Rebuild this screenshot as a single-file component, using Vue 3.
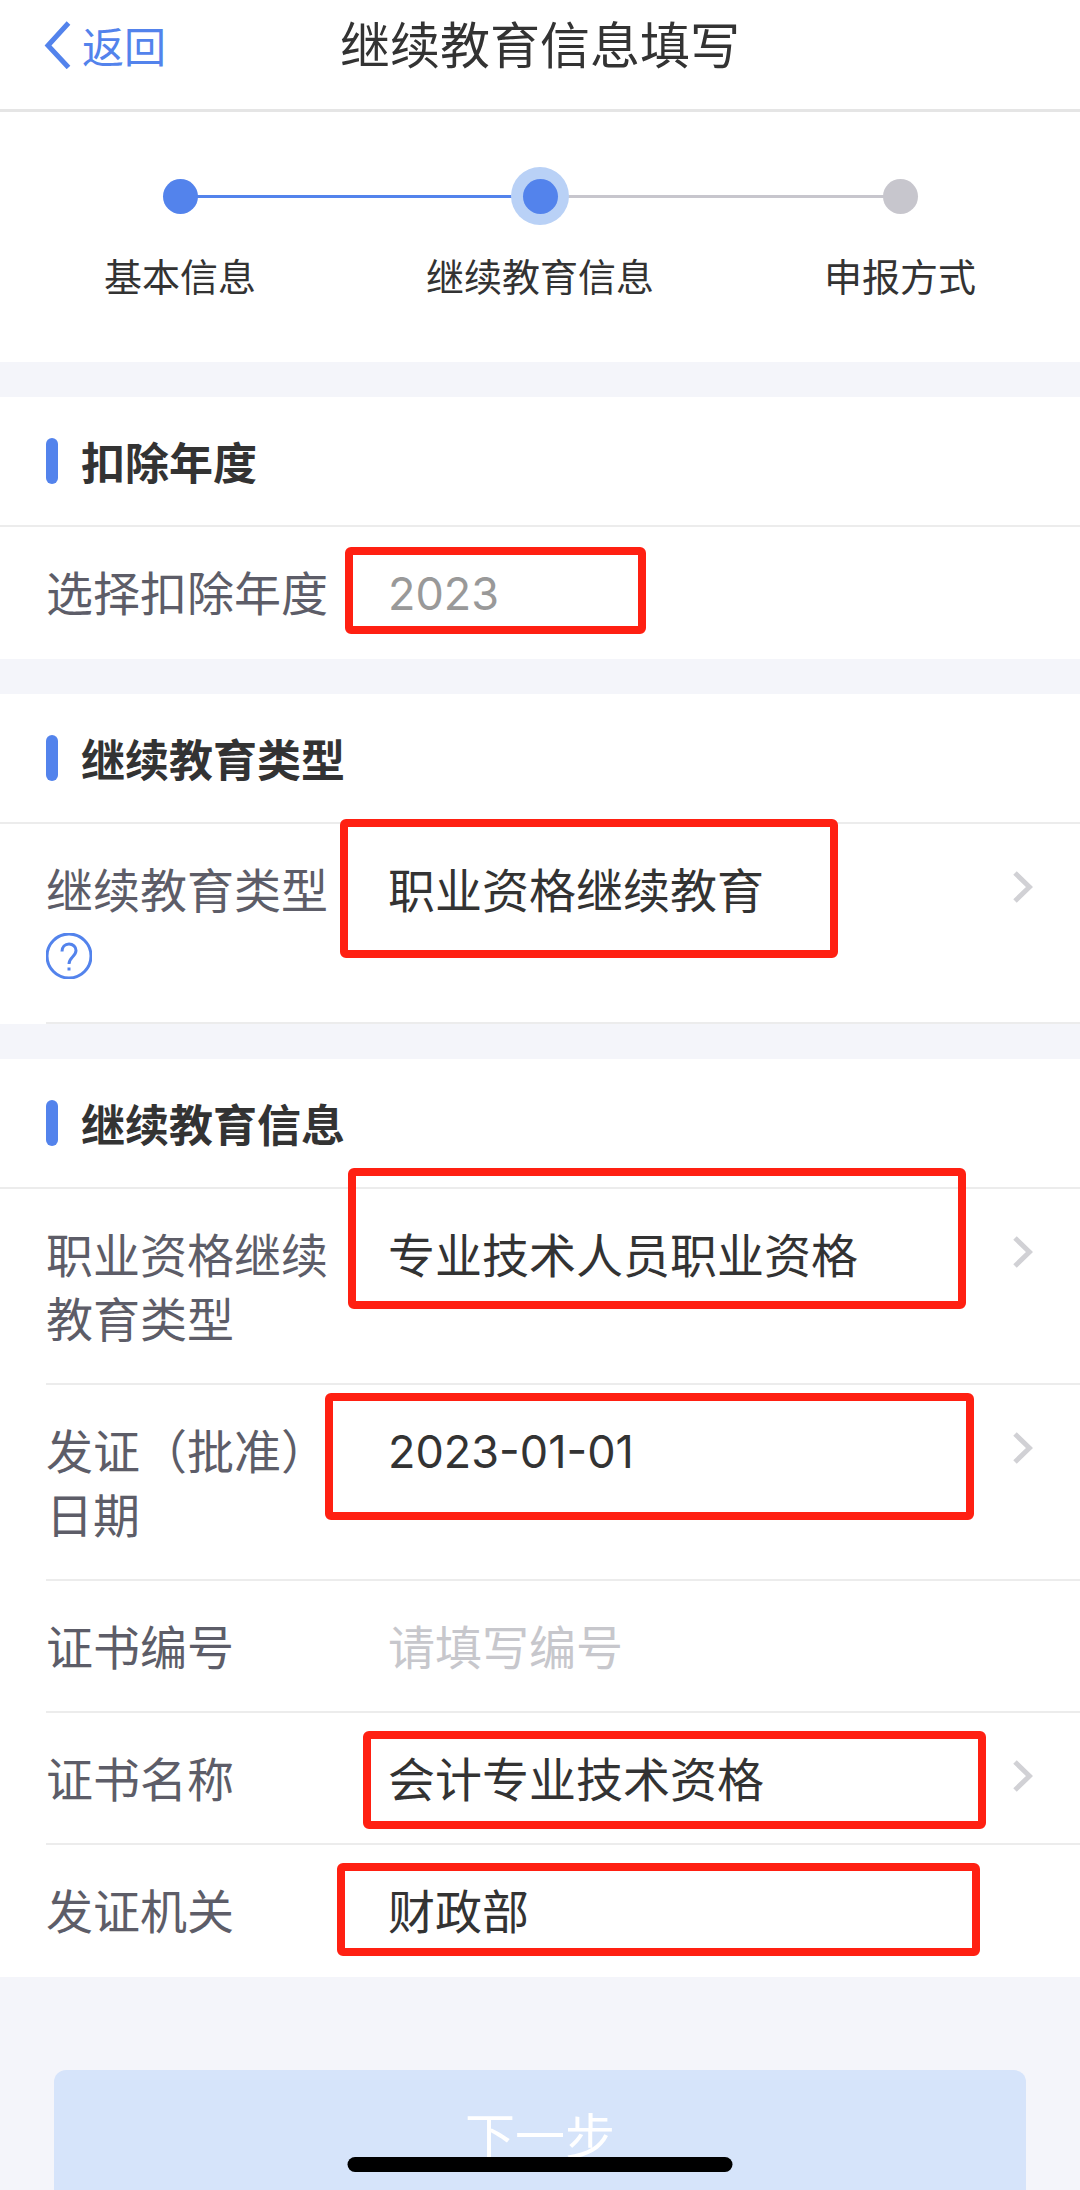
<script setup>
import { reactive } from 'vue'

const steps = [
  { name: '基本信息', state: 'done' },
  { name: '继续教育信息', state: 'current' },
  { name: '申报方式', state: 'todo' },
]

// mark: the red highlight frame drawn around a field, relative to its row
const sections = reactive([
  {
    title: '扣除年度',
    rows: [
      { id: 'year', label: '选择扣除年度', kind: 'fixed', value: '2023', mark: [299, 20, 301, 87] },
    ],
  },
  {
    title: '继续教育类型',
    rows: [
      { id: 'type', label: '继续教育类型', kind: 'select', value: '职业资格继续教育', help: true, line: true, mark: [294, -5, 498, 139] },
    ],
  },
  {
    title: '继续教育信息',
    rows: [
      { id: 'subtype', label: '职业资格继续教育类型', kind: 'select', value: '专业技术人员职业资格', line: true, mark: [302, -21, 618, 141] },
      { id: 'date', label: '发证（批准）日期', kind: 'date', value: '2023-01-01', line: true, mark: [279, 8, 649, 127] },
      { id: 'number', label: '证书编号', kind: 'text', value: '', placeholder: '请填写编号', line: true },
      { id: 'name', label: '证书名称', kind: 'select', value: '会计专业技术资格', line: true, mark: [317, 18, 623, 98] },
      { id: 'issuer', label: '发证机关', kind: 'text', value: '财政部', mark: [291, 18, 643, 93] },
    ],
  },
])

const markStyle = ([left, top, width, height]) => ({
  left: `${left}px`,
  top: `${top}px`,
  width: `${width}px`,
  height: `${height}px`,
})
</script>

<template>
  <div class="screen">
    <div class="scroll">
      <header class="bar">
        <button type="button" class="back">
          <svg width="28" height="48" viewBox="0 0 28 48" aria-hidden="true">
            <path d="M24.500 2 4 24.500l20.500 22" />
          </svg>
          <span>返回</span>
        </button>
        <h1>继续教育信息填写</h1>
      </header>

      <ol class="steps">
        <li v-for="step in steps" :key="step.name" :class="step.state">
          <span class="halo"><span class="dot"></span></span>
          <span class="step-name">{{ step.name }}</span>
        </li>
      </ol>

      <form @submit.prevent>
        <section v-for="section in sections" :key="section.title">
          <h2>{{ section.title }}</h2>
          <div v-for="row in section.rows" :key="row.id" class="row" :class="{ line: row.line }">
            <div class="label-col">
              <label :for="row.id">{{ row.label }}</label>
              <span v-if="row.help" class="help-line">
                <button type="button" class="help" aria-label="说明">
                  <svg width="46" height="46" viewBox="0 0 46 46" aria-hidden="true">
                    <circle cx="23" cy="23" r="22" />
                    <path d="M16 18.500c0-4.500 3-7.500 7-7.500s7 3 7 6.500c0 3-1.500 4.500-3.500 6.500S23 27.500 23 31" />
                    <path d="M23 34.500v3" />
                  </svg>
                </button>
              </span>
            </div>
            <select v-if="row.kind === 'select'" :id="row.id" v-model="row.value" class="value">
              <option :value="row.value">{{ row.value }}</option>
            </select>
            <input
              v-else
              :id="row.id"
              v-model="row.value"
              class="value"
              :class="row.kind"
              type="text"
              :placeholder="row.placeholder"
              :readonly="row.kind !== 'text'"
            />
            <svg
              v-if="row.kind === 'select' || row.kind === 'date'"
              class="chevron"
              width="20"
              height="32"
              viewBox="0 0 20 32"
              aria-hidden="true"
            >
              <path d="M2 2l14.500 14L2 30" />
            </svg>
            <span v-if="row.mark" class="mark" :style="markStyle(row.mark)"></span>
          </div>
        </section>

        <div class="actions">
          <button type="submit" class="next">下一步</button>
        </div>
      </form>
    </div>
    <div class="home-indicator"></div>
  </div>
</template>

<style>
body {
  margin: 0;
  background: #f4f5fa;
}
</style>

<style scoped>
.screen {
  position: relative;
  height: 100vh;
  overflow: hidden;
  background: #f4f5fa;
  color: #333;
  font-family: "Noto Sans CJK SC", sans-serif;
}

.scroll {
  height: 100%;
  overflow-y: auto;
  scrollbar-width: none;
}

button,
input,
select {
  margin: 0;
  padding: 0;
  border: 0;
  background: none;
  color: inherit;
  font: inherit;
}

svg {
  display: block;
  fill: none;
}

.bar {
  display: grid;
  grid-template-columns: 1fr auto 1fr;
  align-items: center;
  box-sizing: border-box;
  height: 112px;
  padding: 0 44px 20px;
  border-bottom: 3px solid #e5e5e5;
  background: #fff;
}

.back {
  display: flex;
  align-items: center;
  justify-self: start;
  gap: 10px;
  color: #5383ec;
  font-size: 42px;
  line-height: 64px;
}

.back svg {
  stroke: #5383ec;
  stroke-width: 5;
}

h1 {
  margin: 0;
  padding-bottom: 6px;
  font-size: 50px;
  font-weight: 400;
  line-height: 64px;
}

.steps {
  display: flex;
  box-sizing: border-box;
  height: 250px;
  margin: 0;
  padding: 55px 0 0;
  background: #fff;
  list-style: none;
}

.steps li {
  position: relative;
  display: flex;
  flex: 1;
  flex-direction: column;
  align-items: center;
  gap: 22px;
}

.steps li + li::before {
  content: "";
  position: absolute;
  top: 28px;
  right: 50%;
  width: 100%;
  height: 3px;
  background: #c7c6cd;
}

.steps li.current::before {
  background: #5383ec;
}

.halo {
  position: relative;
  z-index: 1;
  display: flex;
  align-items: center;
  justify-content: center;
  width: 58px;
  height: 58px;
  border-radius: 50%;
}

.current .halo {
  background: #b9d1f6;
}

.dot {
  width: 35px;
  height: 35px;
  border-radius: 50%;
  background: #5383ec;
}

.todo .dot {
  background: #c7c6cd;
}

.step-name {
  font-size: 38px;
  line-height: 56px;
}

section {
  margin-top: 35px;
  background: #fff;
}

h2 {
  display: flex;
  align-items: center;
  gap: 23px;
  box-sizing: border-box;
  height: 130px;
  margin: 0;
  padding: 0 46px;
  border-bottom: 2px solid #ececec;
  font-size: 44px;
  font-weight: 700;
  line-height: 64px;
}

h2::before {
  content: "";
  width: 12px;
  height: 46px;
  border-radius: 6px;
  background: #5383ec;
}

.row {
  position: relative;
  display: flex;
  align-items: flex-start;
  box-sizing: border-box;
  margin-left: 46px;
  padding: 32px 47px 36px 0;
  font-size: 47px;
  line-height: 64px;
}

.row.line {
  padding-bottom: 34px;
  border-bottom: 2px solid #ececec;
}

.label-col {
  display: flex;
  flex: none;
  flex-direction: column;
  width: 284px;
  margin-right: 58px;
  color: #5d5d68;
}

.help-line {
  display: flex;
  align-items: center;
  height: 64px;
  margin-top: 4px;
}

.help svg {
  stroke: #5383ec;
  stroke-width: 3;
}

.value {
  flex: 1;
  min-width: 0;
  height: 64px;
  outline: 0;
  line-height: 64px;
  appearance: none;
}

.fixed,
.date {
  box-sizing: border-box;
  padding-top: 4px;
  font-family: Inter, "Noto Sans CJK SC", sans-serif;
  font-size: 45px;
  line-height: 60px;
}

.fixed {
  color: #999;
}

.value::placeholder {
  color: #c7c7cc;
  opacity: 1;
}

.chevron {
  flex: none;
  margin-top: 15px;
  stroke: #d1d1d5;
  stroke-width: 5;
}

.mark {
  position: absolute;
  box-sizing: border-box;
  border: 8px solid #ff2012;
  border-radius: 6px;
  pointer-events: none;
}

.actions {
  padding: 93px 54px 60px;
}

.next {
  display: block;
  width: 100%;
  height: 132px;
  padding-bottom: 6px;
  border-radius: 12px;
  background: #d6e4fa;
  color: #fff;
  font-size: 50px;
  line-height: 64px;
}

.home-indicator {
  position: absolute;
  bottom: 18px;
  left: 50%;
  width: 385px;
  height: 15px;
  border-radius: 8px;
  background: #000;
  transform: translateX(-50%);
}
</style>
